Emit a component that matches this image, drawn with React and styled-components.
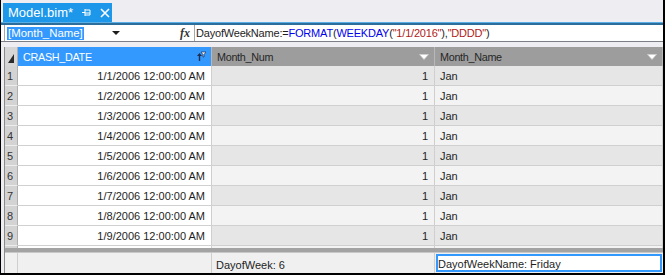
import React from "react";
import styled, { createGlobalStyle } from "styled-components";

const Global = createGlobalStyle`
  html, body { margin: 0; padding: 0; background: #eeeef2; }
  * { box-sizing: border-box; }
`;

const Frame = styled.div`
  width: 665px;
  height: 275px;
  background: #eeeef2;
  border-left: 1px solid #000;
  border-right: 2px solid #000;
  border-bottom: 2px solid #000;
  display: flex;
  flex-direction: column;
  overflow: hidden;
  font-family: "Liberation Sans", Arial, sans-serif;
`;

const TabStrip = styled.div`
  height: 22px;
  padding: 3px 0 0 2px;
  display: flex;
`;

const Tab = styled.div`
  width: 109px;
  height: 19px;
  background: #1c97ea;
  color: #fff;
  font-size: 13px;
  display: flex;
  align-items: center;
  padding-left: 5px;
  gap: 9px;
`;

const TabIcons = styled.div`
  display: flex;
  align-items: center;
  gap: 9px;
`;

const Accent = styled.div`
  height: 3px;
  border-top: 1px solid #5aaee6;
  background: #2b6e9c;
`;

const FormulaBar = styled.div`
  height: 17px;
  background: #fff;
  border-bottom: 1px solid #7a7e86;
  display: flex;
  align-items: stretch;
  font-size: 11px;
`;

const NameBox = styled.div`
  margin-left: 3px;
  width: 121px;
  border-left: 1px solid #a8a8a8;
  display: flex;
  align-items: center;
  justify-content: space-between;
  padding: 0 5px 0 2px;
`;

const Selected = styled.span`
  background: #3399ff;
  color: #fff;
  line-height: 13px;
  padding: 0 1px;
  font-size: 11.4px;
`;

const Arrow = styled.span`
  width: 0;
  height: 0;
  border-left: 4px solid transparent;
  border-right: 4px solid transparent;
  border-top: 4px solid #1e1e1e;
`;

const Fx = styled.div`
  margin-left: 54px;
  width: 16px;
  border-right: 1px solid #a8a8a8;
  font-family: "Liberation Serif", "Times New Roman", serif;
  font-style: italic;
  font-weight: bold;
  font-size: 12px;
  display: flex;
  align-items: center;
  padding-left: 1px;
  color: #333;
`;

const Formula = styled.div`
  display: flex;
  align-items: center;
  padding-left: 1px;
  white-space: pre;
  letter-spacing: -0.2px;
  color: #1e1e1e;
`;

const Tok = styled.span`
  color: ${(p) => (p.$kind === "fn" ? "#0000ee" : p.$kind === "str" ? "#b01818" : "#1e1e1e")};
`;

const Gap = styled.div`
  height: 5px;
`;

const Grid = styled.div`
  margin-left: 3px;
  width: 659px;
  border-left: 1px solid #8a8a8a;
  display: flex;
  flex-direction: column;
  font-size: 11px;
  color: #1e1e1e;
`;

const cols = "13px 194px 223px 228px";

const HeaderRow = styled.div`
  display: grid;
  grid-template-columns: ${cols};
  height: 19px;
  background: #9d9d9d;
`;

const Corner = styled.div`
  background: #d6d6d6;
  border-right: 1px solid #b0b0b0;
  position: relative;
  &::after {
    content: "";
    position: absolute;
    right: 3px;
    bottom: 3px;
    border-left: 6px solid transparent;
    border-bottom: 9px solid #2a2a2a;
  }
`;

const HeadCell = styled.div`
  display: flex;
  align-items: center;
  justify-content: space-between;
  padding: 0 5px 0 5px;
  border-right: 1px solid #b8b8b8;
  background: ${(p) => (p.$active ? "#3399ff" : "#9d9d9d")};
  color: ${(p) => (p.$active ? "#fff" : "#262626")};
  font-size: 10.8px;
  letter-spacing: -0.3px;
`;

const Body = styled.div`
  height: 182px;
  overflow: hidden;
`;

const Row = styled.div`
  display: grid;
  grid-template-columns: ${cols};
  height: 20px;
  border-bottom: 1px solid #d0d0d0;
`;

const RowHead = styled.div`
  background: #d3d3d3;
  border-right: 1px solid #b0b0b0;
  border-bottom: 1px solid #ececec;
  margin-bottom: -1px;
  display: flex;
  align-items: center;
  padding-left: 2px;
  font-size: 11px;
  color: #333;
`;

const Cell = styled.div`
  display: flex;
  align-items: center;
  justify-content: ${(p) => (p.$right ? "flex-end" : "flex-start")};
  padding: 0 6px 0 5px;
  border-right: 1px solid #cfcfcf;
  background: ${(p) => (p.$white ? "#fff" : p.$odd ? "#e6e6e6" : "#f3f3f3")};
`;

const Splitter = styled.div`
  height: 5px;
  background: #a3a3a3;
  border-bottom: 1px solid #c8c8c8;
`;

const Footer = styled.div`
  display: grid;
  grid-template-columns: ${cols};
  height: 20px;
  background: #f0f0f0;
`;

const FootCell = styled.div`
  border-right: 1px solid ${(p) => (p.$line ? "#cfcfcf" : "transparent")};
  display: flex;
  align-items: center;
  padding: ${(p) => (p.$boxed ? "1px 0 1px 1px" : "3px 0 0 4px")};
  font-size: 11px;
`;

const Measure = styled.div`
  width: 100%;
  height: 100%;
  border: 2px solid #3399ff;
  background: #fff;
  display: flex;
  align-items: center;
  padding: 1px 0 0 0;
`;

const PinIcon = () => (
  <svg width="9" height="9" viewBox="0 0 9 9">
    <path d="M0 4.5h3M3 1v7M3 2h5v5H3M3 5h5" stroke="#fff" strokeWidth="1" fill="none" />
  </svg>
);

const CloseIcon = () => (
  <svg width="10" height="10" viewBox="0 0 10 10">
    <path d="M1 1l8 8M9 1l-8 8" stroke="#fff" strokeWidth="1.6" />
  </svg>
);

const SortFilter = () => (
  <svg width="10" height="11" viewBox="0 0 10 11">
    <path d="M1 5l2.5-3L6 5H4.2v5H2.8V5z" fill="#1e2e50" />
    <path d="M5 1h5L8 3.5V6H7V3.5z" fill="#fff" stroke="#1e2e50" strokeWidth="0.7" />
  </svg>
);

const DropArrow = () => (
  <svg width="10" height="6" viewBox="0 0 10 6">
    <path d="M0.5 0.5h9L5 5.5z" fill="#fff" stroke="#d0d0d0" strokeWidth="0.8" />
  </svg>
);

const rows = Array.from({ length: 10 }, (_, i) => i + 1);

export default function App() {
  return (
    <>
      <Global />
      <Frame>
        <TabStrip>
          <Tab>
            Model.bim*
            <TabIcons>
              <PinIcon />
              <CloseIcon />
            </TabIcons>
          </Tab>
        </TabStrip>
        <Accent />
        <FormulaBar>
          <NameBox>
            <Selected>[Month_Name]</Selected>
            <Arrow />
          </NameBox>
          <Fx>fx</Fx>
          <Formula>
            <Tok>DayofWeekName:=</Tok>
            <Tok $kind="fn">FORMAT</Tok>
            <Tok>(</Tok>
            <Tok $kind="fn">WEEKDAY</Tok>
            <Tok>(</Tok>
            <Tok $kind="str">"1/1/2016"</Tok>
            <Tok>),</Tok>
            <Tok $kind="str">"DDDD"</Tok>
            <Tok>)</Tok>
          </Formula>
        </FormulaBar>
        <Gap />
        <Grid>
          <HeaderRow>
            <Corner />
            <HeadCell $active>
              CRASH_DATE
              <SortFilter />
            </HeadCell>
            <HeadCell>
              Month_Num
              <DropArrow />
            </HeadCell>
            <HeadCell>
              Month_Name
              <DropArrow />
            </HeadCell>
          </HeaderRow>
          <Body>
            {rows.map((n) => {
              const shown = n < 10;
              return (
                <Row key={n}>
                  <RowHead>{shown ? n : ""}</RowHead>
                  <Cell $right $white>
                    {shown ? `1/${n}/2006 12:00:00 AM` : ""}
                  </Cell>
                  <Cell $right $odd={n % 2 === 1}>
                    {shown ? "1" : ""}
                  </Cell>
                  <Cell $odd={n % 2 === 1}>{shown ? "Jan" : ""}</Cell>
                </Row>
              );
            })}
          </Body>
          <Splitter />
          <Footer>
            <FootCell $line />
            <FootCell $line />
            <FootCell $line>DayofWeek: 6</FootCell>
            <FootCell $boxed>
              <Measure>DayofWeekName: Friday</Measure>
            </FootCell>
          </Footer>
        </Grid>
      </Frame>
    </>
  );
}
